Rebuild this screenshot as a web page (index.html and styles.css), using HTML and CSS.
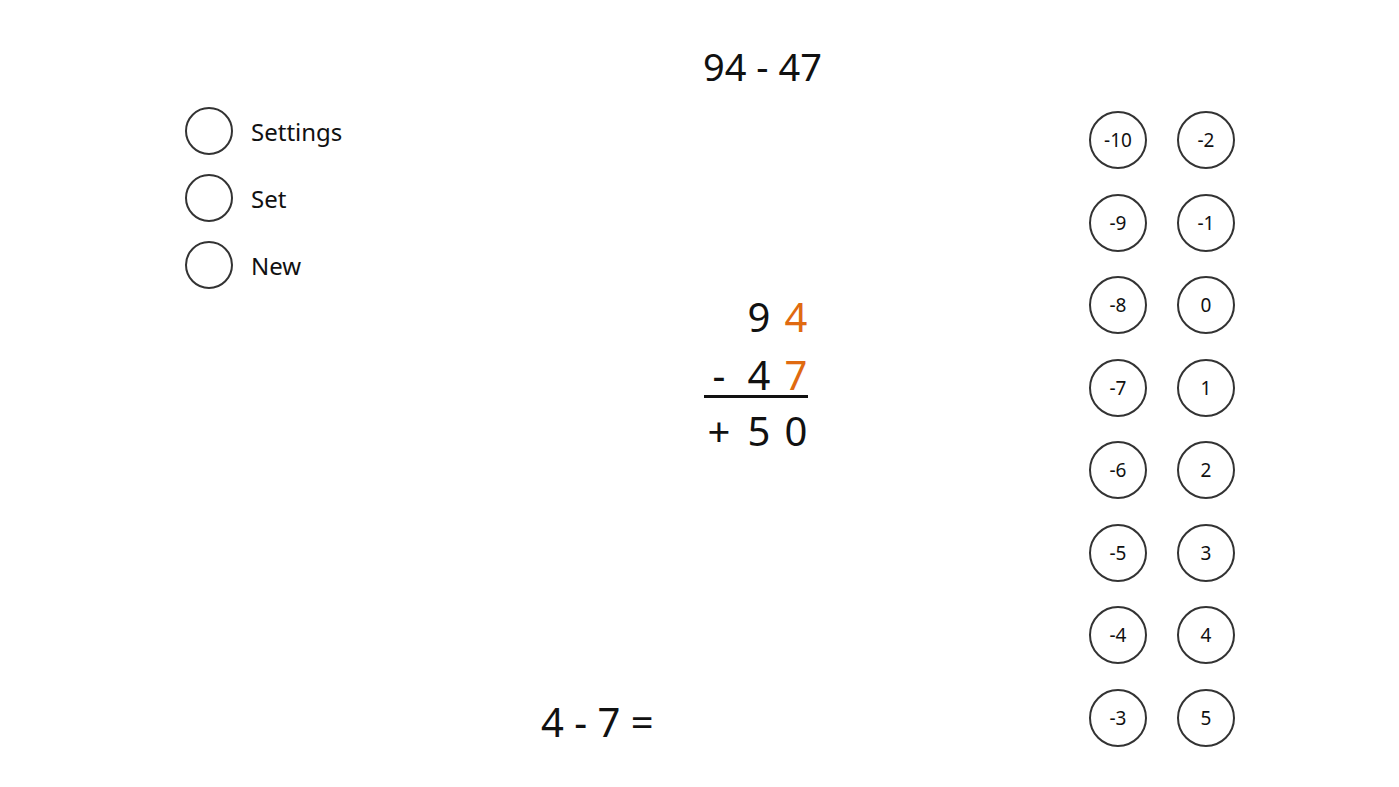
FILE: index.html
```html
<!DOCTYPE html>
<html>
<head>
    <title>Subtraction Trainer</title>
    <link rel="stylesheet" href="styles.css">
</head>
<body>
    <div class="page">
        <!-- Menu -->
        <div class="menu">
            <div class="menu-item"><button class="ring"></button><span>Settings</span></div>
            <div class="menu-item"><button class="ring"></button><span>Set</span></div>
            <div class="menu-item"><button class="ring"></button><span>New</span></div>
        </div>

        <!-- Task -->
        <div class="task">
            <div class="title">94 - 47</div>
            <div class="column">
                <div class="row">
                    <span></span><span>9</span><span class="active">4</span>
                </div>
                <div class="row sum-line">
                    <span>-</span><span>4</span><span class="active">7</span>
                </div>
                <div class="row">
                    <span>+</span><span>5</span><span>0</span>
                </div>
            </div>
            <div class="step">4 - 7 =</div>
        </div>

        <!-- Answer pad -->
        <div class="pad" id="pad"></div>
    </div>

    <script>
        const pad = document.getElementById('pad');
        for (let n = -10; n <= 5; n++) {
            const b = document.createElement('button');
            b.className = 'key';
            b.textContent = n;
            pad.appendChild(b);
        }
    </script>
</body>
</html>
```

FILE: styles.css
```css
body { margin: 0; background: #fff; color: #111; font-family: "Noto Sans", "Open Sans", sans-serif; }
.page { display: grid; grid-template-columns: 520px 569px 1fr; height: 787px; overflow: hidden; }

.menu { padding: 107px 0 0 185px; display: flex; flex-direction: column; gap: 19px; }
.menu-item { display: flex; align-items: center; gap: 18px; font-size: 24px; }
.ring { width: 48px; height: 48px; border: 2px solid #333; border-radius: 50%; background: #fff; padding: 0; flex: none; }

.task { display: flex; flex-direction: column; align-items: flex-start; padding-top: 42px; font-size: 40px; }
.title { margin-left: 183px; line-height: 48px; font-size: 38px; }
.column { margin-left: 184px; margin-top: 207px; }
.row { display: grid; grid-template-columns: 30px 50px 24px; line-height: 40px; }
.row span { text-align: center; }
.row + .row { margin-top: 18px; }
.sum-line { border-bottom: 3px solid #111; }
.sum-line + .row { margin-top: 13px; }
.active { color: #e06a10; }
.step { margin-left: 21px; margin-top: auto; margin-bottom: 41px; line-height: 48px; }

.pad { padding-top: 111px; display: grid; grid-template-rows: repeat(8, 58px); grid-template-columns: 58px 58px; grid-auto-flow: column; column-gap: 30px; row-gap: 24.5px; align-content: start; }
.key { width: 58px; height: 58px; border: 2px solid #333; border-radius: 50%; background: #fff; padding: 0; font-family: inherit; font-size: 19px; color: #111; }
```
